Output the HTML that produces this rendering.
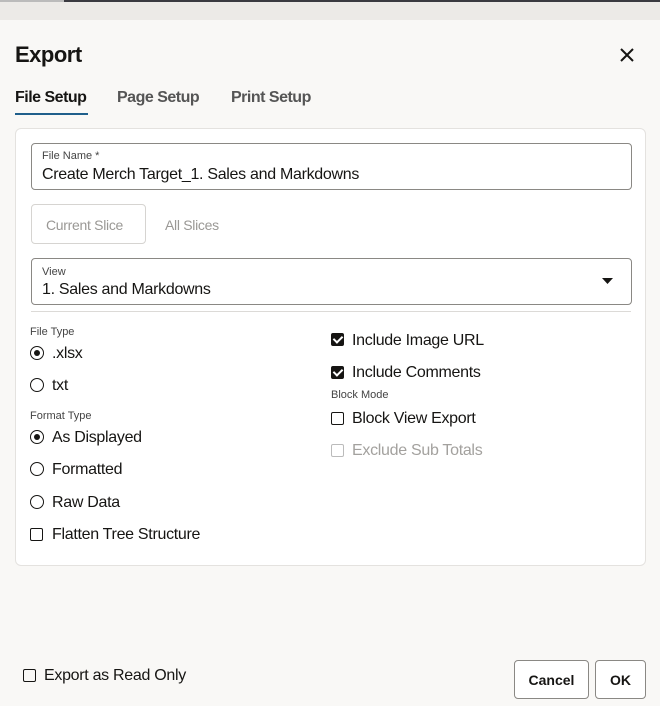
<!DOCTYPE html>
<html><head><style>
*{margin:0;padding:0;box-sizing:border-box}
body{width:660px;height:706px;background:#f9f8f6;font-family:"Liberation Sans",sans-serif;color:#161513;position:relative;overflow:hidden}
.a{position:absolute;white-space:nowrap}
.top{position:absolute;left:0;top:0;width:660px;height:20px;background:#eceae7}
.top:before{content:"";position:absolute;left:0;top:0;width:660px;height:2px;background:#3a3a40}
.top:after{content:"";position:absolute;left:0;top:0;width:64px;height:2px;background:#bbb}
.panel{position:absolute;left:15px;top:128px;width:631px;height:438px;background:#fff;border:1px solid #e4e2df;border-radius:6px}
.field{position:absolute;left:31px;width:601px;height:47px;border:1px solid #8a8884;border-radius:4px;background:#fff}
.lbl{font-size:11px;color:#444;}
.val{font-size:16px;letter-spacing:-0.3px}
.rad{position:absolute;width:14px;height:14px;border:1.5px solid #161513;border-radius:50%}
.rad.on:after{content:"";position:absolute;left:2.5px;top:2.5px;width:6px;height:6px;border-radius:50%;background:#161513}
.cb{position:absolute;width:13px;height:13px;border:1.5px solid #161513;border-radius:2px}
.cb.on{background:#161513}
.cb.on:after{content:"";position:absolute;left:3px;top:0px;width:4px;height:7px;border:solid #fff;border-width:0 2px 2px 0;transform:rotate(45deg)}
.t{font-size:16px;letter-spacing:-0.3px}
.btn{position:absolute;border:1px solid #8a8884;border-radius:4px;background:#fff;font-size:14px;font-weight:bold;text-align:center;color:#161513}
</style></head><body>
<div class="top"></div>
<div class="a" style="left:15px;top:42px;font-size:22px;font-weight:bold;letter-spacing:-0.5px">Export</div>
<svg class="a" style="left:620px;top:48px" width="14" height="14" viewBox="0 0 14 14"><path d="M1 1L13 13M13 1L1 13" stroke="#161513" stroke-width="2"/></svg>
<div class="a" style="left:15px;top:89px;font-size:16px;font-weight:bold;letter-spacing:-0.5px">File Setup</div>
<div class="a" style="left:15px;top:113px;width:73px;height:2px;background:#1f5f8b"></div>
<div class="a" style="left:117px;top:89px;font-size:16px;font-weight:bold;letter-spacing:-0.5px;color:#555">Page Setup</div>
<div class="a" style="left:231px;top:89px;font-size:16px;font-weight:bold;letter-spacing:-0.5px;color:#555">Print Setup</div>
<div class="panel"></div>
<div class="field" style="top:143px"></div>
<div class="a lbl" style="left:42px;top:150px">File Name *</div>
<div class="a val" style="left:42px;top:166px">Create Merch Target_1. Sales and Markdowns</div>
<div class="a" style="left:31px;top:204px;width:115px;height:40px;border:1px solid #d6d4d1;border-radius:4px;background:#fff"></div>
<div class="a" style="left:46px;top:217px;font-size:14px;color:#9a9895;letter-spacing:-0.3px">Current Slice</div>
<div class="a" style="left:165px;top:217px;font-size:14px;color:#9a9895;letter-spacing:-0.3px">All Slices</div>
<div class="field" style="top:258px"></div>
<div class="a lbl" style="left:42px;top:266px">View</div>
<div class="a val" style="left:42px;top:281px">1. Sales and Markdowns</div>
<svg class="a" style="left:602px;top:278px" width="11" height="6"><path d="M0 0H11L5.5 6Z" fill="#161513"/></svg>
<div class="a" style="left:31px;top:311px;width:600px;height:1px;background:#dcdad7"></div>

<div class="a lbl" style="left:30px;top:326px">File Type</div>
<div class="rad on" style="left:30px;top:346px"></div><div class="a t" style="left:52px;top:345px">.xlsx</div>
<div class="rad" style="left:30px;top:378px"></div><div class="a t" style="left:52px;top:377px">txt</div>
<div class="a lbl" style="left:30px;top:410px">Format Type</div>
<div class="rad on" style="left:30px;top:430px"></div><div class="a t" style="left:52px;top:429px">As Displayed</div>
<div class="rad" style="left:30px;top:462px"></div><div class="a t" style="left:52px;top:461px">Formatted</div>
<div class="rad" style="left:30px;top:495px"></div><div class="a t" style="left:52px;top:494px">Raw Data</div>
<div class="cb" style="left:30px;top:528px"></div><div class="a t" style="left:52px;top:526px">Flatten Tree Structure</div>

<div class="cb on" style="left:331px;top:333px"></div><div class="a t" style="left:352px;top:332px">Include Image URL</div>
<div class="cb on" style="left:331px;top:366px"></div><div class="a t" style="left:352px;top:364px">Include Comments</div>
<div class="a lbl" style="left:331px;top:389px">Block Mode</div>
<div class="cb" style="left:331px;top:412px"></div><div class="a t" style="left:352px;top:410px">Block View Export</div>
<div class="cb" style="left:331px;top:444px;border-color:#bbb"></div><div class="a t" style="left:352px;top:442px;color:#a3a19e">Exclude Sub Totals</div>

<div class="cb" style="left:23px;top:669px"></div><div class="a t" style="left:44px;top:667px">Export as Read Only</div>
<div class="btn" style="left:514px;top:660px;width:75px;height:39px;line-height:39px">Cancel</div>
<div class="btn" style="left:595px;top:660px;width:51px;height:39px;line-height:39px">OK</div>
</body></html>
